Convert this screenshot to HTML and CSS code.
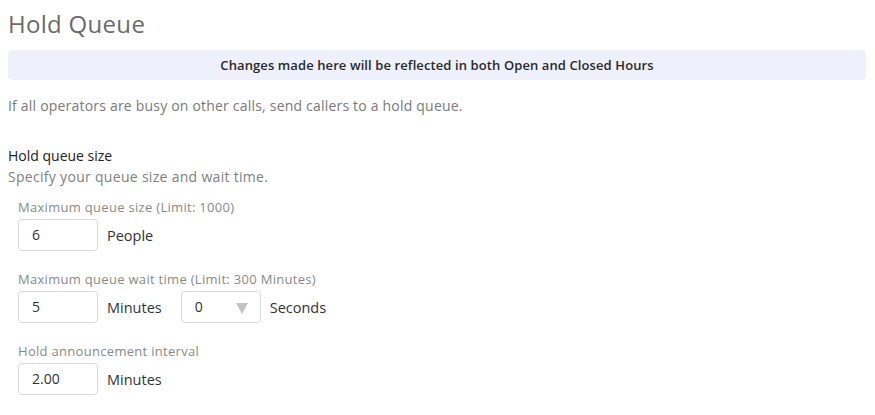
FILE: index.html
```html
<!DOCTYPE html>
<html>
<head>
<meta charset="utf-8">
<link rel="stylesheet" href="styles.css">
</head>
<body>
<div class="page">
  <h1 class="title">Hold Queue</h1>
  <div class="banner">Changes made here will be reflected in both Open and Closed Hours</div>
  <p class="desc">If all operators are busy on other calls, send callers to a hold queue.</p>

  <div class="section">
    <div class="section-title">Hold queue size</div>
    <div class="section-sub">Specify your queue size and wait time.</div>

    <div class="field">
      <div class="label">Maximum queue size (Limit: 1000)</div>
      <div class="row">
        <div class="box">6</div>
        <span class="unit">People</span>
      </div>
    </div>

    <div class="field">
      <div class="label">Maximum queue wait time (Limit: 300 Minutes)</div>
      <div class="row">
        <div class="box">5</div>
        <span class="unit">Minutes</span>
        <div class="box select">0<span class="caret"></span></div>
        <span class="unit">Seconds</span>
      </div>
    </div>

    <div class="field">
      <div class="label">Hold announcement interval</div>
      <div class="row">
        <div class="box">2.00</div>
        <span class="unit">Minutes</span>
      </div>
    </div>
  </div>
</div>
</body>
</html>
```
FILE: styles.css
```css
html, body {
  margin: 0;
  padding: 0;
  background: #fff;
}
body {
  font-family: "Open Sans", "Noto Sans", sans-serif;
}
.page {
  padding: 8px 9px 0 8px;
}
.title {
  margin: 0;
  font-size: 24px;
  font-weight: 400;
  letter-spacing: 0.3px;
  color: #6b6b6b;
  line-height: 32px;
  height: 34px;
}
.banner {
  margin-top: 8px;
  height: 30px;
  line-height: 30px;
  background: #eef0fc;
  border-radius: 4px;
  text-align: center;
  font-size: 13px;
  font-weight: 600;
  letter-spacing: 0.1px;
  color: #2a2a2a;
}
.desc {
  margin: 17px 0 0;
  font-size: 14px;
  line-height: 18px;
  letter-spacing: 0.2px;
  color: #7a7a7a;
}
.section {
  margin-top: 32px;
}
.section-title {
  font-size: 14px;
  line-height: 18px;
  color: #222;
}
.section-sub {
  margin-top: 3px;
  font-size: 14px;
  line-height: 18px;
  letter-spacing: 0.3px;
  color: #808080;
}
.field {
  padding-left: 10px;
  margin-top: 13px;
}
.field + .field {
  margin-top: 20px;
}
.label {
  font-size: 13px;
  line-height: 16px;
  letter-spacing: 0.3px;
  color: #8a8a8a;
}
.row {
  margin-top: 4px;
  display: flex;
  align-items: center;
}
.box {
  box-sizing: border-box;
  width: 80px;
  height: 32px;
  border: 1px solid #d9d9d9;
  border-radius: 4px;
  padding-left: 13px;
  font-size: 14px;
  line-height: 30px;
  color: #333;
  position: relative;
}
.unit {
  margin-left: 9px;
  font-size: 14.5px;
  color: #333;
}
.unit + .box {
  margin-left: 19px;
}
.caret {
  position: absolute;
  right: 12px;
  top: 11px;
  width: 0;
  height: 0;
  border-left: 6px solid transparent;
  border-right: 6px solid transparent;
  border-top: 11px solid #c4c4c4;
}
```
